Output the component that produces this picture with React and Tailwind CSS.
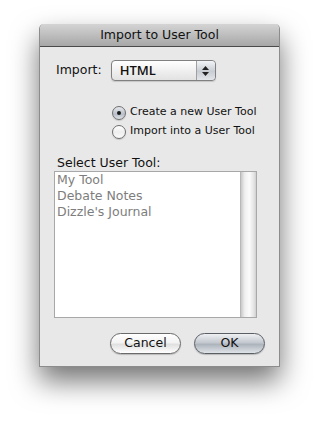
import React from 'react';

const font = { fontFamily: '"DejaVu Sans", "Liberation Sans", sans-serif' };

function Radio({ checked, label }) {
  return (
    <div className="flex items-center h-[19px]">
      <div
        className={`w-[14px] h-[14px] rounded-full border border-[#6e6e6e] flex items-center justify-center shadow-[0_1px_1px_rgba(0,0,0,0.15)] ${
          checked
            ? 'bg-[linear-gradient(#e6e9ee,#b9bfc8_60%,#dfe3e8)]'
            : 'bg-[linear-gradient(#ffffff,#eeeeee_50%,#fafafa)]'
        }`}
      >
        {checked && <div className="w-[4px] h-[4px] rounded-full bg-[#1a1a1a]" />}
      </div>
      <span className="ml-[4px] text-[11px] text-[#111]">{label}</span>
    </div>
  );
}

export default function App() {
  return (
    <div className="w-[320px] h-[422px] bg-white pt-[24px] pl-[39px]" style={font}>
      <div className="w-[241px] h-[343px] rounded-t-[5px] bg-[#e8e8e8] border-x border-b border-[#8c8c8c] shadow-[0_14px_28px_rgba(0,0,0,0.55)] flex flex-col">
        {/* title bar */}
        <div className="h-[23px] rounded-t-[5px] bg-[linear-gradient(#d4d4d4,#a7a7a7)] border-b border-[#4a4a4a] flex items-center justify-center">
          <span className="text-[12.5px] text-[#111]">Import to User Tool</span>
        </div>

        {/* import row */}
        <div className="flex items-center mt-[13px] pl-[16px]">
          <span className="text-[12.5px] text-[#111]">Import:</span>
          <div className="ml-[9px] w-[105px] h-[21px] rounded-[4px] border border-[#808080] bg-[linear-gradient(#ffffff,#f0f0f0_50%,#e2e2e2)] shadow-[0_1px_1px_rgba(0,0,0,0.15)] flex items-center">
            <span className="flex-1 pl-[8px] text-[13px] font-semibold text-[#111]" style={{ fontFamily: '"Open Sans", "DejaVu Sans", sans-serif' }}>HTML</span>
            <div className="w-[19px] h-full border-l border-[#a0a0a0] rounded-r-[4px] bg-[linear-gradient(#f2f4f7,#c8cdd4_55%,#e3e6ea)] flex flex-col items-center justify-center gap-[2px]">
              <svg width="7" height="4" viewBox="0 0 7 4"><path d="M3.5 0L7 4H0z" fill="#222" /></svg>
              <svg width="7" height="4" viewBox="0 0 7 4"><path d="M0 0H7L3.5 4z" fill="#222" /></svg>
            </div>
          </div>
        </div>

        {/* radios */}
        <div className="flex flex-col mt-[22px] pl-[72px]">
          <Radio checked label="Create a new User Tool" />
          <Radio label="Import into a User Tool" />
        </div>

        {/* list */}
        <div className="mt-[15px] pl-[17px] text-[12.5px] text-[#111] leading-[14px]">Select User Tool:</div>
        <div className="ml-[14px] mt-[1px] w-[203px] h-[147px] border border-[#a8a8a8] bg-white flex">
          <div className="flex-1 flex flex-col pl-[2px] text-[12.5px] text-[#7d7d7d] leading-[16px]">
            <span>My Tool</span>
            <span>Debate Notes</span>
            <span>Dizzle's Journal</span>
          </div>
          <div className="w-[16px] h-full bg-[linear-gradient(90deg,#c9c9c9,#efefef_25%,#fbfbfb_55%,#e4e4e4_85%,#d0d0d0)] border-l border-[#b8b8b8]" />
        </div>

        {/* buttons */}
        <div className="flex justify-end gap-[13px] mt-[15px] pr-[14px]">
          <div className="w-[71px] h-[21px] rounded-full border border-[#6a6a6a] bg-[linear-gradient(#ffffff,#f3f3f3_45%,#e0e0e0_55%,#ffffff)] shadow-[0_1px_1px_rgba(0,0,0,0.2)] flex items-center justify-center text-[12.5px] text-[#111]">
            Cancel
          </div>
          <div className="w-[71px] h-[21px] rounded-full border border-[#5a5f66] bg-[linear-gradient(#eef0f3,#c4c9d0_45%,#aeb4bc_55%,#dfe3e8)] shadow-[0_1px_1px_rgba(0,0,0,0.2)] flex items-center justify-center text-[12.5px] text-[#111]">
            OK
          </div>
        </div>
      </div>
    </div>
  );
}
